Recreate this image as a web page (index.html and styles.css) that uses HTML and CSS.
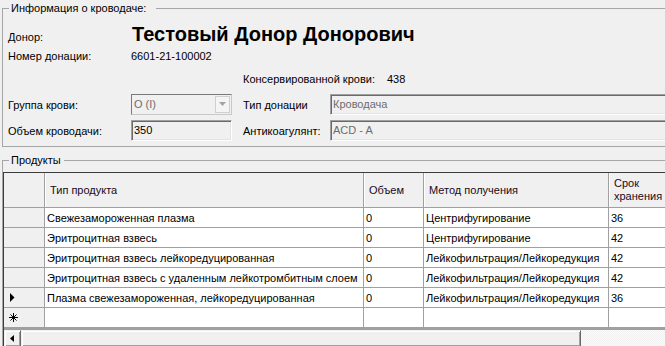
FILE: index.html
```html
<!DOCTYPE html>
<html lang="ru">
<head>
<meta charset="utf-8">
<title>Информация о кроводаче</title>
<link rel="stylesheet" href="styles.css">
</head>
<body>
<div class="window">
  <fieldset class="group info">
    <legend class="legend-info">Информация о кроводаче:</legend>
    <div class="row donor">
      <span class="lbl">Донор:</span>
      <span class="name">Тестовый Донор Донорович</span>
    </div>
    <div class="row num">
      <span class="lbl">Номер донации:</span>
      <span class="val">6601-21-100002</span>
    </div>
    <div class="row cons">
      <span class="lbl-cons">Консервированной крови:</span>
      <span class="val">438</span>
    </div>
    <div class="row fields first">
      <span class="lbl">Группа крови:</span>
      <div class="combo">
        <span class="ctext">O (I)</span>
        <span class="cbtn"><svg width="9" height="5" viewBox="0 0 9 5"><polygon points="1,0 8,0 4.5,4" fill="#a3a3a3"/></svg></span>
      </div>
      <span class="lbl2">Тип донации</span>
      <div class="tb wide dis">Кроводача</div>
    </div>
    <div class="row fields second">
      <span class="lbl">Объем кроводачи:</span>
      <div class="tb narrow">350</div>
      <span class="lbl2">Антикоагулянт:</span>
      <div class="tb wide dis">ACD - A</div>
    </div>
  </fieldset>

  <fieldset class="group products">
    <legend class="legend-prod">Продукты</legend>
    <div class="grid">
      <div class="table">
        <div class="hc rh"></div>
        <div class="hc">Тип продукта</div>
        <div class="hc">Объем</div>
        <div class="hc">Метод получения</div>
        <div class="hc">Срок<br>хранения</div>

        <div class="rc"></div>
        <div class="c">Свежезамороженная плазма</div>
        <div class="c">0</div>
        <div class="c">Центрифугирование</div>
        <div class="c">36</div>

        <div class="rc"></div>
        <div class="c">Эритроцитная взвесь</div>
        <div class="c">0</div>
        <div class="c">Центрифугирование</div>
        <div class="c">42</div>

        <div class="rc"></div>
        <div class="c">Эритроцитная взвесь лейкоредуцированная</div>
        <div class="c">0</div>
        <div class="c">Лейкофильтрация/Лейкоредукция</div>
        <div class="c">42</div>

        <div class="rc"></div>
        <div class="c">Эритроцитная взвесь с удаленным лейкотромбитным слоем</div>
        <div class="c">0</div>
        <div class="c">Лейкофильтрация/Лейкоредукция</div>
        <div class="c">42</div>

        <div class="rc"><svg class="cur" width="5" height="9" viewBox="0 0 5 9"><polygon points="0,0 4.5,4.5 0,9" fill="#000"/></svg></div>
        <div class="c">Плазма свежезамороженная, лейкоредуцированная</div>
        <div class="c">0</div>
        <div class="c">Лейкофильтрация/Лейкоредукция</div>
        <div class="c">36</div>

        <div class="rc"><svg class="star" width="9" height="9" viewBox="0 0 9 9"><g stroke="#000" stroke-width="1"><line x1="4.5" y1="0" x2="4.5" y2="9"/><line x1="0" y1="4.5" x2="9" y2="4.5"/><line x1="1.5" y1="1.5" x2="7.5" y2="7.5"/><line x1="7.5" y1="1.5" x2="1.5" y2="7.5"/></g></svg></div>
        <div class="c"></div>
        <div class="c"></div>
        <div class="c"></div>
        <div class="c"></div>
      </div>
      <div class="band"></div>
      <div class="hscroll">
        <div class="sbtn"><svg width="4" height="7" viewBox="0 0 4 7"><polygon points="4,0 0,3.5 4,7" fill="#000"/></svg></div>
        <div class="thumb"></div>
        <div class="track"></div>
      </div>
    </div>
  </fieldset>
</div>
</body>
</html>
```

FILE: styles.css
```css
html, body {
  margin: 0;
  padding: 0;
}
body {
  background: #f0f0f0;
  font-family: "Liberation Sans", Arial, sans-serif;
  font-size: 11px;
  line-height: 13px;
  color: #000;
  width: 665px;
  height: 346px;
  overflow: hidden;
}
.window {
  width: 670px;
  padding-top: 2px;
}
.group {
  margin: 0 0 0 2px;
  border: 1px solid #a6a6a6;
  min-inline-size: 0;
}
legend {
  font-size: 11px;
  line-height: 13px;
  margin-left: 1px;
}
.info {
  padding: 0 0 5px 5px;
}
.legend-info {
  padding: 0 10px 0 2px;
}
.products {
  margin-top: 7px;
  padding: 0;
}
.legend-prod {
  margin-left: 6px;
  padding: 0 3px 0 2px;
}
.row {
  display: flex;
}
.lbl {
  width: 123px;
  flex: none;
}
.donor {
  margin-top: 8px;
  align-items: baseline;
  height: 22px;
}
.name {
  font-weight: bold;
  font-size: 20px;
  line-height: 22px;
  margin-left: 1px;
}
.num {
  margin-top: 5px;
}
.cons {
  margin-top: 10px;
  padding-left: 235px;
}
.lbl-cons {
  width: 144px;
  flex: none;
}
.fields {
  align-items: center;
  height: 21px;
}
.fields .lbl {
  padding-top: 2px;
}
.first {
  margin-top: 8px;
}
.second {
  margin-top: 5px;
}
.lbl2 {
  width: 87px;
  flex: none;
  margin-left: 11px;
  padding-top: 2px;
}
.combo {
  box-sizing: border-box;
  width: 101px;
  height: 21px;
  border: 1px solid;
  border-color: #7a7a7a #c8c8c8 #c8c8c8 #7a7a7a;
  display: flex;
  align-items: center;
  flex: none;
}
.ctext {
  flex: 1;
  padding-left: 2px;
  color: #6d6d6d;
}
.cbtn {
  box-sizing: border-box;
  width: 15px;
  height: 17px;
  margin-right: 1px;
  border: 1px solid #cfcfcf;
  background: #f4f4f4;
  display: flex;
  align-items: center;
  justify-content: center;
}
.tb {
  box-sizing: border-box;
  height: 21px;
  border: 1px solid;
  border-color: #a0a0a0 #ffffff #ffffff #a0a0a0;
  box-shadow: inset 1px 1px 0 #696969, inset -1px -1px 0 #e3e3e3;
  background: #f0f0f0;
  padding: 3px 0 0 2px;
  flex: none;
}
.narrow {
  width: 101px;
}
.wide {
  width: 340px;
}
.dis {
  color: #6d6d6d;
}
.grid {
  margin-top: 5px;
  border-left: 1px solid #3c3c3c;
  border-top: 1px solid #3c3c3c;
}
.table {
  display: grid;
  grid-template-columns: 41px 319px 60px 185px 1fr;
  grid-template-rows: 35px repeat(6, 20px);
}
.hc {
  box-sizing: border-box;
  background: #f0f0f0;
  border-right: 1px solid #a0a0a0;
  border-bottom: 1px solid #a0a0a0;
  box-shadow: inset 1px 0 0 #ffffff;
  padding-left: 5px;
  display: flex;
  align-items: center;
  color: #1a0a1a;
}
.hc.rh {
  box-shadow: none;
}
.rc {
  box-sizing: border-box;
  background: #f0f0f0;
  border-right: 1px solid #a0a0a0;
  border-bottom: 1px solid #a0a0a0;
  display: flex;
  align-items: center;
}
.cur {
  margin-left: 6px;
}
.star {
  margin-left: 5px;
}
.c {
  box-sizing: border-box;
  background: #ffffff;
  border-right: 1px solid #a0a0a0;
  border-bottom: 1px solid #a0a0a0;
  padding: 4px 0 0 2px;
  white-space: nowrap;
  overflow: hidden;
}
.band {
  height: 2px;
  background: #a0a0a0;
}
.hscroll {
  display: flex;
  height: 17px;
}
.sbtn {
  box-sizing: border-box;
  width: 17px;
  height: 17px;
  background: #f0f0f0;
  border: 1px solid;
  border-color: #f0f0f0 #696969 #696969 #f0f0f0;
  box-shadow: inset 1px 1px 0 #ffffff, inset -1px -1px 0 #a0a0a0;
  display: flex;
  align-items: center;
  justify-content: center;
  flex: none;
}
.sbtn svg {
  margin-left: -2px;
}
.thumb {
  box-sizing: border-box;
  width: 560px;
  height: 17px;
  background: #f0f0f0;
  border: 1px solid;
  border-color: #f0f0f0 #696969 #696969 #f0f0f0;
  box-shadow: inset 1px 1px 0 #ffffff, inset -1px -1px 0 #a0a0a0;
  flex: none;
}
.track {
  flex: 1;
  background-color: #fafafa;
  background-image: repeating-conic-gradient(#f0f0f0 0 25%, #fcfcfc 0 50%);
  background-size: 2px 2px;
}
```
